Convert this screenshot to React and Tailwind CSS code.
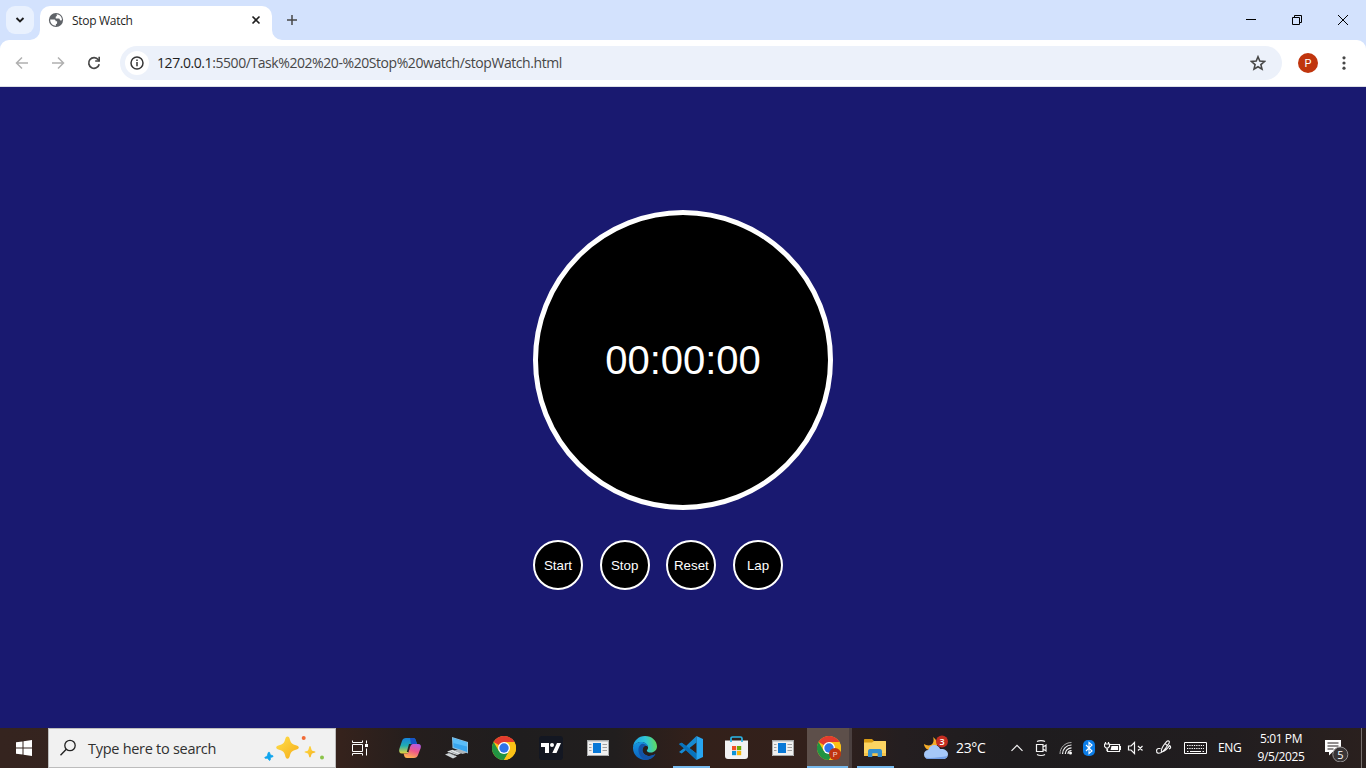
import React from "react";

const ui = "font-['Open_Sans','Noto_Sans',sans-serif]";

function Icon({ w = 24, h = 24, className = "", children, ...rest }) {
  return (
    <svg width={w} height={h} viewBox={`0 0 ${w} ${h}`} fill="none" className={`block shrink-0 ${className}`} {...rest}>
      {children}
    </svg>
  );
}

function TabStrip() {
  return (
    <div className="flex h-10 w-full bg-[#d3e2fd]">
      <div className="mt-[6px] ml-[6px] flex h-7 w-7 shrink-0 items-center justify-center rounded-[9px] bg-[#e9f1fe]">
        <Icon w={10} h={8}>
          <path d="M1.500 2l3.500 3.500L8.500 2" stroke="#1f1f1f" strokeWidth="1.900" />
        </Icon>
      </div>
      <div className="relative mt-[6px] ml-[6px] flex h-[34px] w-[232px] shrink-0 items-start rounded-t-[10px] bg-white">
        <Icon w={10} h={10} className="absolute bottom-0 -left-[10px]">
          <path d="M10 0v10H0A10 10 0 0 0 10 0z" fill="#fff" />
        </Icon>
        <Icon w={10} h={10} className="absolute -right-[10px] bottom-0">
          <path d="M0 0v10h10A10 10 0 0 1 0 0z" fill="#fff" />
        </Icon>
        <Icon w={16} h={16} className="mt-[6px] ml-2">
          <circle cx="8" cy="8" r="7.100" fill="#5f6368" />
          <path d="M8.600 2.200c1.300.1 2.800.7 3.900 1.900 1 1.200 1.500 2.600 1.400 4.200-1.200.4-2-.1-2.200-1.100-.3-.9-1-.8-1.900-.8H7.700V5.100c0-.7.400-.8.900-.9.600-.2.100-1 0-2z" fill="#fff" />
          <path d="M2.200 7.600h3.600c1.300 0 1.900.7 1.900 1.700h1.400v1.600c0 .8-.5 1-1.200 1v1.900C4.800 13.900 2 11.300 2.200 7.600z" fill="#fff" />
        </Icon>
        <span className={`${ui} mt-[6px] ml-2 text-[12px] leading-[17px] tracking-[-0.3px] whitespace-nowrap text-[#1f1f1f]`}>Stop Watch</span>
        <Icon w={10} h={10} className="absolute top-[9px] left-[211px]">
          <path d="M1.500 1.500l7 7M8.500 1.500l-7 7" stroke="#1f1f1f" strokeWidth="1.600" />
        </Icon>
      </div>
      <Icon w={12} h={12} className="mt-[14px] ml-[14px]">
        <path d="M6 1v10M1 6h10" stroke="#474747" strokeWidth="1.500" />
      </Icon>
      <div className="mr-[17px] ml-auto flex items-center gap-[34px]">
        <Icon w={12} h={12}><path d="M1 5.500h10" stroke="#000" /></Icon>
        <Icon w={12} h={12}><path d="M1.500 3.500h7v7h-7zM3.500 3.500v-2h7v7h-2" stroke="#000" /></Icon>
        <Icon w={12} h={12}><path d="M1 1l10 10M11 1L1 11" stroke="#000" strokeWidth="1" /></Icon>
      </div>
    </div>
  );
}

function Toolbar() {
  return (
    <div className="bg-[#d3e2fd]">
      <div className="flex h-[47px] items-center rounded-t-[9px] border-b border-[#dcdfe6] bg-white">
        <Icon w={16} h={16} className="ml-[14px]">
          <path d="M14 8H3M8 2.500L2.500 8 8 13.500" stroke="#b0b0b0" strokeWidth="1.500" />
        </Icon>
        <Icon w={16} h={16} className="ml-5">
          <path d="M2 8h11M8 2.500L13.500 8 8 13.500" stroke="#b0b0b0" strokeWidth="1.500" />
        </Icon>
        <Icon w={16} h={16} className="ml-5">
          <path d="M13.200 9.200A5.300 5.300 0 1 1 12.300 4.800L13.300 6" stroke="#474747" strokeWidth="1.700" />
          <path d="M14 1.800v5H9.200V5.300h3.200V1.800z" fill="#474747" />
        </Icon>
        <div className="ml-[18px] flex h-[34px] w-[1162px] items-center rounded-full bg-[#ecf1fa]">
          <div className="ml-[5px] flex h-6 w-6 items-center justify-center rounded-full bg-white">
            <Icon w={14} h={14}>
              <circle cx="7" cy="7" r="6" stroke="#363636" strokeWidth="1.500" />
              <path d="M7 6v4.200M7 3.600v1.500" stroke="#363636" strokeWidth="1.500" />
            </Icon>
          </div>
          <span className={`${ui} ml-2 text-[14px] leading-5 tracking-[-0.43px] whitespace-nowrap text-[#474747]`}>
            <span className="text-[#1f1f1f]">127.0.0.1</span>:5500/Task%202%20-%20Stop%20watch/stopWatch.html
          </span>
          <Icon w={16} h={16} className="mr-4 ml-auto">
            <path d="M8 1.800l1.800 4.300 4.700.4-3.600 3.100 1.100 4.500L8 11.700l-4 2.400 1.100-4.500L1.500 6.500l4.700-.4z" stroke="#474747" strokeWidth="1.600" />
          </Icon>
        </div>
        <div className="ml-4 flex h-5 w-5 items-center justify-center rounded-full bg-[#c0350d] font-[Roboto,sans-serif] text-[11px] leading-none text-white">P</div>
        <Icon w={16} h={16} className="ml-[18px]">
          <circle cx="8" cy="2.800" r="1.600" fill="#474747" />
          <circle cx="8" cy="8" r="1.600" fill="#474747" />
          <circle cx="8" cy="13.200" r="1.600" fill="#474747" />
        </Icon>
      </div>
    </div>
  );
}

function RoundButton({ children }) {
  return (
    <button className="flex h-[50px] w-[50px] shrink-0 items-center justify-center rounded-full border-2 border-white bg-black pt-[2px] font-['Liberation_Sans',Arial,sans-serif] text-[13.333px] leading-none text-white">
      {children}
    </button>
  );
}

function StopWatch() {
  return (
    <main className="flex h-[641px] justify-center bg-[#191970] pt-[123px]">
      <div className="w-[300px]">
        <div className="flex h-[300px] w-[300px] items-center justify-center rounded-full border-[5px] border-white bg-black font-['Liberation_Sans',Arial,sans-serif] text-[40px] text-white">
          00:00:00
        </div>
        <div className="mt-[30px] flex gap-[16.7px]">
          <RoundButton>Start</RoundButton>
          <RoundButton>Stop</RoundButton>
          <RoundButton>Reset</RoundButton>
          <RoundButton>Lap</RoundButton>
        </div>
      </div>
    </main>
  );
}

function ChromeMark({ profile }) {
  return (
    <Icon>
      <circle cx="12" cy="12" r="12" fill="#fbc116" />
      <path d="M12 12L1.600 6A12 12 0 0 1 22.400 6H12z" fill="#e33b2e" />
      <path d="M1.600 6A12 12 0 0 0 12 24l5.200-9L12 12 6.800 15z" fill="#229342" />
      <path d="M12 6h10.400A12 12 0 0 1 12 24l5.200-9z" fill="#fbc116" />
      <circle cx="12" cy="12" r="6" fill="#fff" />
      <circle cx="12" cy="12" r="4.700" fill="#2f73e8" />
      {profile && (
        <>
          <circle cx="18" cy="18" r="6" fill="#bf3410" />
          <text x="18" y="20.700" textAnchor="middle" fontSize="7.500" fontFamily="Roboto, sans-serif" fill="#f2d9d0">P</text>
        </>
      )}
    </Icon>
  );
}

function WindowMark() {
  return (
    <Icon>
      <path d="M1 4h22v16H1z" fill="#f0f0f0" />
      <path d="M1 4h22v1.500H1z" fill="#a9b0b5" />
      <path d="M1.500 4.500h21v15h-21z" stroke="#a7a9aa" />
      <path d="M7 7h8v10H7z" fill="#0878d7" />
      <path d="M3 8.500h2.500M3 11.500h2.500M3 14.500h2.500M16.500 8.500H21M16.500 11.500H21M16.500 14.500H21" stroke="#a0a0a0" />
    </Icon>
  );
}

function CopilotMark() {
  return (
    <Icon>
      <defs>
        <linearGradient id="cpA" x1="0" y1="0" x2="0" y2="1">
          <stop offset="0" stopColor="#1682dd" /><stop offset=".5" stopColor="#21aeb0" /><stop offset="1" stopColor="#e8d43b" />
        </linearGradient>
        <linearGradient id="cpB" x1=".8" y1="0" x2=".4" y2="1">
          <stop offset="0" stopColor="#b05ce8" /><stop offset=".5" stopColor="#f0568a" /><stop offset="1" stopColor="#ffb052" />
        </linearGradient>
      </defs>
      <path d="M8 2h7c2 0 2.500 1 3 3l1 3h-4c-2 0-2.500 1-3 3l-1.500 5c-.5 1-1 1.500-2.500 1.500H4c-2.500 0-3.300-2-2.700-4.500L4 5c.6-2 2-3 4-3z" fill="url(#cpA)" />
      <path d="M16 22H9c-2 0-2.500-1-3-3l-.4-1.500H8c1.500 0 2-.5 2.500-1.500L12 11c.5-2 1-3 3-3h5c2.500 0 3.300 1.500 2.700 4L20 19c-.6 2-2 3-4 3z" fill="url(#cpB)" />
      <path d="M12 2h3c2 0 2.500 1 3 3l1 3h-4c-1 0-1.600.2-2 .8z" fill="#1653c8" />
      <path d="M11 8h3c-1 .6-1.500 1.500-2 3l-1.500 5H8.800z" fill="#282222" />
    </Icon>
  );
}

function ComputerMark() {
  return (
    <Icon>
      <path d="M7 1l16 5v11.500L7.500 12z" fill="#8fc4e4" />
      <path d="M8 2.300l14 4.300v9.300L8.500 11.200z" fill="#38a5ee" />
      <path d="M8 2.300l14 4.300v4L8.200 7z" fill="#5bbdf8" />
      <path d="M9 14.500l5-1 8.500 3-5 1.500z" fill="#aeb5ba" />
      <path d="M2 15.500l5.500-1.700 8.500 3.500-4 1.700z" fill="#e2e6e8" />
      <path d="M0 18.500l4-1.500 8 3.500-4 2z" fill="#cfd4d7" />
      <path d="M3 16.500l8 3M6 15.500l7.500 3" stroke="#858d92" strokeWidth=".6" />
    </Icon>
  );
}

function TradingViewMark() {
  return (
    <Icon>
      <rect width="24" height="24" rx="3" fill="#131722" />
      <path d="M2 7h8v10H6v-6H2zM18 7h4l-4.500 10h-4.200z" fill="#fff" />
      <circle cx="13" cy="9" r="2" fill="#fff" />
    </Icon>
  );
}

function EdgeMark() {
  return (
    <Icon>
      <defs>
        <linearGradient id="edA" x1="0" y1=".5" x2="1" y2=".4">
          <stop stopColor="#1b9de2" /><stop offset=".55" stopColor="#30c6d8" /><stop offset="1" stopColor="#62dc58" />
        </linearGradient>
        <linearGradient id="edB" x1="0" y1="0" x2="0" y2="1">
          <stop stopColor="#1595e0" /><stop offset="1" stopColor="#0b60bd" />
        </linearGradient>
      </defs>
      <path d="M0 11C.6 4.700 5.600 0 12 0c7 0 12 5 12 10.500 0 3.600-3 6-6 6-2.500 0-4.200-1-4.200-1.800 0-.6 1.300-1.200 1.300-3.200C15 8.500 12 6 8.500 6 4.500 6 1.500 8 0 11z" fill="url(#edA)" />
      <path d="M0 11c1.500-3.600 5-5 8.500-5 3.300 0 6.400 2.300 6.600 5-1.200-1.700-3.500-1.400-4.800.3-2.400 3.300.1 7.900 4.700 8.600 3 .4 5.500-.7 7.400-1.800C20.400 22 16.500 24 12.300 24 5 24-.5 18 0 11z" fill="url(#edB)" />
      <path d="M8.500 8c-4 2-5.200 11 3.300 16 4.700.3 8.700-2.300 10.600-5.900-2 1.100-4.400 2.200-7.400 1.800-4.600-.7-7.100-5.300-4.700-8.600.8-1.100 2-1.700 3-1.600-1-1.500-3-2.300-4.800-1.700z" fill="#1353a8" />
    </Icon>
  );
}

function CodeMark() {
  return (
    <Icon>
      <path d="M17.500 0L7 10 2.700 6.700 0 8l5.200 4L0 16l2.700 1.400L7 14l10.500 10V17.500L10.500 12l7-5.500z" fill="#168bd4" />
      <path d="M0 8l2.700-1.300L17.500 17.500V24z" fill="#0873bd" />
      <path d="M17.500 0L24 3v18l-6.500 3z" fill="#27a5f1" />
    </Icon>
  );
}

function StoreMark() {
  return (
    <Icon>
      <path d="M0 5.500h23V21c0 2-1 3-3 3H3c-2 0-3-1-3-3z" fill="#f2f2f3" transform="translate(0 -1)" />
      <path d="M6 6V2.600C6 1.500 6.600 1 7.500 1h8c1 0 1.500.5 1.500 1.600V6" stroke="#2bb6e8" strokeWidth="1.700" />
      <path d="M7 10h4.200v4.200H7z" fill="#f25022" />
      <path d="M12 10h4.200v4.200H12z" fill="#6eaa05" />
      <path d="M7 15h4.200v4.200H7z" fill="#0b94d8" />
      <path d="M12 15h4.200v4.200H12z" fill="#f5b50b" />
    </Icon>
  );
}

function FolderMark() {
  return (
    <Icon>
      <path d="M1 4c0-.7.400-1 1-1h7l2 2h11c.7 0 1 .3 1 1v13H1z" fill="#d79a13" />
      <path d="M1 6.500h8l2-1.500h11c.7 0 1 .3 1 1v14H1z" fill="#fcd462" />
      <path d="M1 17h22v3H1z" fill="#f4c34a" />
      <path d="M5 21v-5.500C5 14 5.600 13 7 13h10c1.400 0 2 1 2 2.500V21h-4.300v-3.700H9.300V21z" fill="#338fcf" />
    </Icon>
  );
}

function SearchBox() {
  return (
    <div className="flex h-10 w-72 shrink-0 items-center border border-[#bcbcbc] bg-[#f1f1f1]">
      <Icon w={18} h={18} className="ml-[10px]">
        <circle cx="11" cy="6.500" r="5.200" stroke="#222" strokeWidth="1.300" />
        <path d="M7.300 10.200L1.500 16.200" stroke="#222" strokeWidth="1.400" />
      </Icon>
      <span className={`${ui} mt-px ml-[11px] text-[14.500px] leading-5 tracking-[-0.28px] whitespace-nowrap text-[#303030]`}>Type here to search</span>
      <Icon w={64} h={28} className="mr-[9px] ml-auto">
        <defs>
          <linearGradient id="spark" x1="0" y1="0" x2="1" y2="1"><stop stopColor="#ffe04c" /><stop offset="1" stopColor="#f5ac18" /></linearGradient>
        </defs>
        <path d="M25.500 2.500c1.300 0 2 1 2.500 3.500 1 3 2 4 5 5 2.500.6 3.800 1.300 3.800 2.500S35.500 15.400 33 16c-3 1-4 2-5 5-.5 2.500-1.200 3.700-2.500 3.700S23.500 23.500 23 21c-1-3-2-4-5-5-2.500-.6-3.800-1.300-3.800-2.500S15.500 11.600 18 11c3-1 4-2 5-5 .5-2.500 1.200-3.500 2.500-3.500z" fill="url(#spark)" />
        <path d="M48 12c1 0 1.200 3.700 2 4.500S53.500 17 53.500 18s-2.700.8-3.500 1.600-1 4-2 4-1.200-3.200-2-4-3.500-.6-3.500-1.600 2.700-.7 3.500-1.500 1-4.500 2-4.500z" fill="url(#spark)" />
        <path d="M7 18c1 0 .7 2.500 1.600 3 .8.500 2.500.2 2.500 1.200s-1.700.7-2.400 1.400c-.6.700 0 2.800-1 2.800s-1.200-1.600-2-2-3 .4-3-.6 2-1 2.500-1.900S6 18 7 18z" fill="#10a5ee" stroke="#10a5ee" strokeWidth=".8" />
        <circle cx="41.700" cy="4" r="2" fill="#f16a36" />
        <circle cx="60" cy="23.500" r="2" fill="#8bc34a" />
      </Icon>
    </div>
  );
}

function Slot({ className, children, line }) {
  return (
    <div className={`relative flex h-10 shrink-0 items-center ${className}`}>
      {children}
      {line && <div className={`absolute bottom-0 h-[2px] bg-[#76b9ed] ${line}`} />}
    </div>
  );
}

function Tray() {
  const white = { stroke: "#f4f4f4", strokeWidth: 1.2 };
  return (
    <div className={`${ui} flex h-10 flex-1 items-center text-white`}>
      <Icon w={26} h={26} className="ml-[25px]">
        <path d="M10 2c2 5-1 10-7 8l-2-1c0 3 3 7 8 6s8-8 1-13z" fill="#f5ac28" />
        <path d="M6 24c-3 0-5-1.700-5-4.500s2-4.500 4.300-4.500c1-3.300 3.200-5 6-5 3 0 5 1.700 5.800 4 4-.6 7.900 1.500 7.900 5 0 3-2 5-5 5z" fill="#a6c8f8" />
        <path d="M2 22.500c5 1 15 0 22.500-1.500-1 2-2.500 3-4.500 3H6c-1.500 0-3-.5-4-1.500z" fill="#739fe6" />
        <circle cx="19" cy="6.500" r="6" fill="#c52e21" />
        <text x="19" y="9.700" textAnchor="middle" fontSize="9" fontWeight="600" fontFamily="Open Sans, sans-serif" fill="#fff">3</text>
      </Icon>
      <span className="ml-[7px] w-[30px] text-[14px] leading-5 tracking-[-0.35px] whitespace-nowrap">23°C</span>
      <Icon w={14} h={10} className="ml-[24px]"><path d="M1.500 7.800L7 2.300l5.500 5.500" {...white} /></Icon>
      <Icon w={16} h={18} className="ml-[9px]">
        <path d="M3.500 5.500h6.500v7H3.500zM10 8l3-2v6l-3-2M4 2.500c2-1.300 6-1.300 8 0M4 15.500c2 1.300 6 1.300 8 0" {...white} />
      </Icon>
      <Icon w={16} h={16} className="ml-[9px]">
        <path d="M2 14C2 7.500 7 2.500 13.500 2.500" stroke="#aaa" strokeWidth="1" />
        <path d="M4.500 14C4.500 9 8.500 5 13.500 5M7.300 14c0-3.500 2.700-6.200 6.200-6.200M10 14c0-2 1.500-3.500 3.500-3.500" {...white} />
        <circle cx="12.500" cy="13" r="1.500" fill="#fff" />
      </Icon>
      <Icon w={12} h={16} className="ml-[9px]">
        <rect width="12" height="16" rx="5" fill="#0b7de8" />
        <path d="M3 5l6 6-3 2.500v-11L9 5l-6 6" stroke="#fff" strokeWidth="1.100" />
      </Icon>
      <Icon w={18} h={16} className="ml-[9px]">
        <path d="M6 4.500h9.500v7H3.500V9" {...white} />
        <path d="M7.500 6h6.500v4H6.500zM15.500 6h1.500v4h-1.500z" fill="#fff" />
        <path d="M1.500 2v2M4.500 2v2M.5 4h5v2.500L4 8H2L.5 6.500zM3 8v3" {...white} />
      </Icon>
      <Icon w={18} h={16} className="ml-[5px]">
        <path d="M1.500 6h2.500L7.500 2.500v11L4 10H1.500zM11 6l4.500 4.500M15.500 6L11 10.500" {...white} />
      </Icon>
      <Icon w={18} h={18} className="ml-[10px]">
        <path d="M5.500 9.500H3.600c-2.500 0-2.800 4.200-.5 4.700 5 1 8.400-6.400 11-10.200 1-1.700-1-3-2.300-1.600C9 5.500 5.800 10 6.500 12.500c2 1.500 7-4 8-6 1.600 1 1.600 3-.5 3.300M10.500 5l2 1.600" {...white} />
      </Icon>
      <Icon w={24} h={14} className="ml-[11px]">
        <path d="M.5 1.500h22v11H.5z" stroke="#fff" />
        <path d="M3 4.500h17M3 7.500h17" stroke="#fff" strokeDasharray="1.300 1" />
        <path d="M3 10.500h1.500M6 10.500h11M18.500 10.500H20" stroke="#fff" />
      </Icon>
      <span className="ml-[10px] w-[24px] text-[12px] leading-5 tracking-[-0.3px]">ENG</span>
      <div className="ml-[12px] flex w-[54px] flex-col items-center text-[12px] leading-[18px] tracking-[-0.4px] whitespace-nowrap">
        <span>5:01 PM</span>
        <span>9/5/2025</span>
      </div>
      <Icon w={28} h={28} className="ml-[15px]">
        <path d="M2 6h16v12H9.500L6 21.500V18H2z" fill="#fff" />
        <path d="M4.500 9h11M4.500 12h11M4.500 15h6" stroke="#241f20" />
        <circle cx="17.300" cy="20.500" r="7.500" fill="#393536" stroke="#969394" />
        <text x="17.300" y="24.500" textAnchor="middle" fontSize="11" fontWeight="500" fontFamily="Open Sans, sans-serif" fill="#fff">5</text>
      </Icon>
      <div className="mr-1 ml-auto h-10 w-px bg-[#77706e]" />
    </div>
  );
}

function Taskbar() {
  return (
    <div className="flex h-10 w-full bg-[linear-gradient(90deg,#35241f_0%,#35221c_25%,#251e1d_30%,#1f1d1e_38%,#211e1e_45%,#33201a_51%,#32201b_60%,#241e20_66%,#1e1c1e_74%,#211d1f_90%,#2a201e_100%)]">
      <div className="flex w-12 shrink-0 items-center justify-center">
        <Icon w={16} h={16}>
          <path d="M0 2.300L6.500 1.400v6.100H0zM7.500 1.200L16 0v7.500H7.500zM0 8.500h6.500v6.100L0 13.700zM7.500 8.500H16V16l-8.500-1.200z" fill="#fff" />
        </Icon>
      </div>
      <SearchBox />
      <div className="flex w-[50px] shrink-0 items-center pl-[15px]">
        <Icon w={18} h={18}>
          <path d="M1.500 5.500h10v7h-10zM1.500 1.500v2h10v-2M1.500 16.500v-2h10v2M15.500 1.500v3M15.500 9.500v7" stroke="#fff" />
          <path d="M14 5h3v3h-3z" fill="#fff" />
        </Icon>
      </div>
      <Slot className="w-[47px] pl-3"><CopilotMark /></Slot>
      <Slot className="w-[47px] pl-3"><ComputerMark /></Slot>
      <Slot className="w-[47px] pl-3"><ChromeMark /></Slot>
      <Slot className="w-[47px] pl-3"><TradingViewMark /></Slot>
      <Slot className="w-[47px] pl-3"><WindowMark /></Slot>
      <Slot className="w-[47px] pl-3"><EdgeMark /></Slot>
      <Slot className="w-[46px] pl-[11px]" line="left-[5px] w-[37px]"><CodeMark /></Slot>
      <Slot className="w-[46px] pl-[11px]"><StoreMark /></Slot>
      <Slot className="w-[47px] pl-[11px]"><WindowMark /></Slot>
      <Slot className="w-[45px] border-r-[3px] border-[#4b403f] bg-[#5d4f4a] pl-[10px]" line="left-0 w-[41px]"><ChromeMark profile /></Slot>
      <Slot className="w-[46px] pl-[11px]" line="left-[5px] w-[37px]"><FolderMark /></Slot>
      <Tray />
    </div>
  );
}

export default function App() {
  return (
    <div className="flex h-[768px] w-[1366px] flex-col overflow-hidden bg-[#191970]">
      <TabStrip />
      <Toolbar />
      <StopWatch />
      <Taskbar />
    </div>
  );
}
